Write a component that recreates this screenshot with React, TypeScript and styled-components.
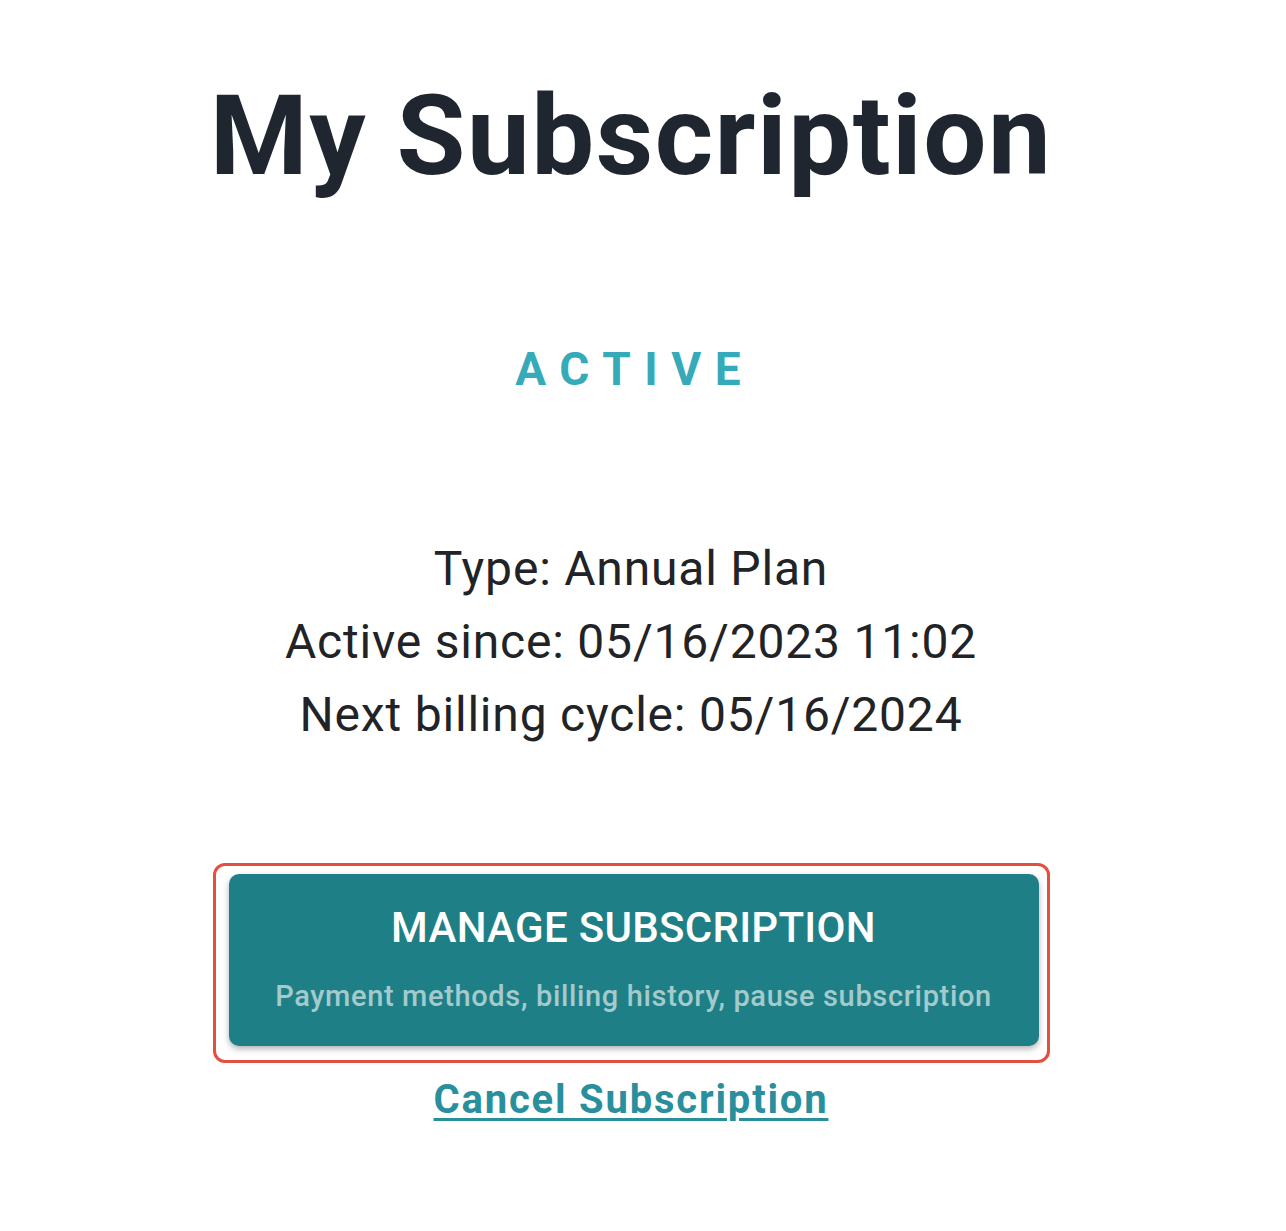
import styled, { createGlobalStyle } from "styled-components";

const Global = createGlobalStyle`
  html, body {
    margin: 0;
    padding: 0;
    background: #ffffff;
  }
  body {
    font-family: Roboto, "Noto Sans", "Liberation Sans", sans-serif;
  }
`;

export default function App() {
  return (
    <>
      <Global />
      <Page>
        <Title>My Subscription</Title>
        <Status>ACTIVE</Status>
        <Details>
          <Line>Type: Annual Plan</Line>
          <Line>Active since: 05/16/2023 11:02</Line>
          <Line>Next billing cycle: 05/16/2024</Line>
        </Details>
        <Highlight>
          <ManageButton type="button">
            <ButtonTitle>MANAGE SUBSCRIPTION</ButtonTitle>
            <ButtonHint>Payment methods, billing history, pause subscription</ButtonHint>
          </ManageButton>
        </Highlight>
        <CancelLink href="#">Cancel Subscription</CancelLink>
      </Page>
    </>
  );
}

const Page = styled.main`
  display: flex;
  flex-direction: column;
  align-items: center;
  padding: 70px 24px 0 0;
  min-height: 1231px;
  box-sizing: border-box;
`;

const Title = styled.h1`
  margin: 0;
  font-size: 112px;
  font-weight: 700;
  line-height: 132px;
  color: #1f2630;
  letter-spacing: 1.5px;
`;

const Status = styled.div`
  margin-top: 139px;
  font-size: 46px;
  font-weight: 700;
  letter-spacing: 13.5px;
  padding-left: 13.5px;
  margin-right: 6px;
  color: #35aab9;
  line-height: 56px;
`;

const Details = styled.div`
  margin-top: 135px;
  display: flex;
  flex-direction: column;
  align-items: center;
`;

const Line = styled.div`
  font-size: 48px;
  line-height: 73px;
  color: #222326;
  letter-spacing: 0.8px;
`;

const Highlight = styled.div`
  margin-top: 112px;
  border: 3px solid #e2503f;
  border-radius: 12px;
  padding: 8px 8px 14px 13px;
`;

const ManageButton = styled.button`
  display: flex;
  flex-direction: column;
  align-items: center;
  width: 810px;
  height: 172px;
  border: 0;
  border-radius: 10px;
  background: #1f7f86;
  box-shadow: 0 3px 6px rgba(0, 0, 0, 0.3);
  font-family: inherit;
  cursor: pointer;
  padding: 28px 0 0;
  box-sizing: border-box;
`;

const ButtonTitle = styled.span`
  font-size: 42px;
  font-weight: 500;
  color: #ffffff;
  line-height: 52px;
  letter-spacing: 0.3px;
`;

const ButtonHint = styled.span`
  margin-top: 25px;
  font-size: 29px;
  font-weight: 500;
  color: #a3cbcd;
  line-height: 34px;
  letter-spacing: 0.65px;
`;

const CancelLink = styled.a`
  margin-top: 12px;
  font-size: 40px;
  font-weight: 700;
  color: #2a8f9c;
  text-decoration: underline;
  text-underline-offset: 5px;
  text-decoration-thickness: 3px;
  line-height: 50px;
  letter-spacing: 1.8px;
`;
